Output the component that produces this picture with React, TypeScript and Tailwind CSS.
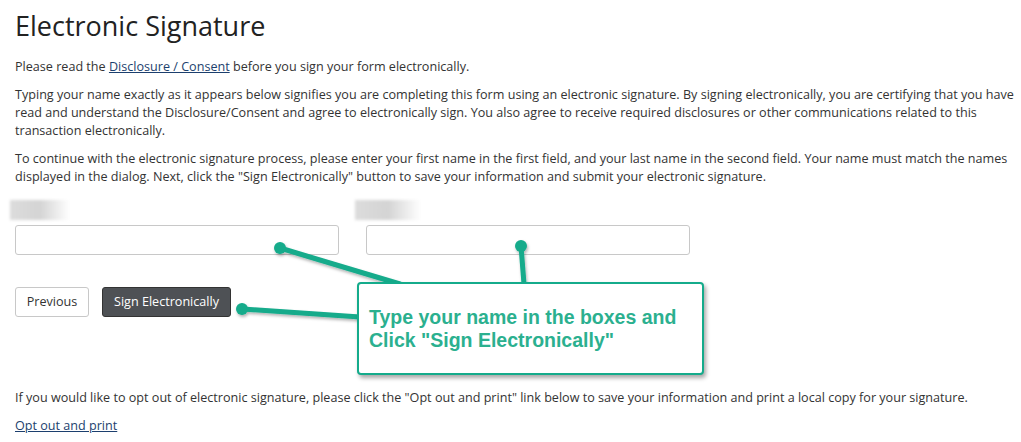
import React from "react";

const font = { fontFamily: '"Open Sans", "Liberation Sans", sans-serif' };

function BlurLabel({ className }: { className: string }) {
  return (
    <div
      className={`mb-[5px] h-[20px] bg-gradient-to-r from-[#dcdcdc] via-[#d4d4d4] to-white blur-[1.5px] ${className}`}
    />
  );
}

export default function App() {
  return (
    <div className="relative min-h-[442px] w-[1021px] bg-white text-[#333]" style={font}>
      <div className="pl-[15px] pr-[3px] pt-[9px]">
        <h1 className="text-[27px] leading-[34px] font-normal text-[#222]">Electronic Signature</h1>

        <div className="mt-[15px] space-y-[10px] text-[12.6px] leading-[18px]">
          <p>
            Please read the{" "}
            <a href="#" className="text-[#1c3f6e] underline">
              Disclosure / Consent
            </a>{" "}
            before you sign your form electronically.
          </p>
          <p>
            Typing your name exactly as it appears below signifies you are completing this form using an electronic
            signature. By signing electronically, you are certifying that you have read and understand the
            Disclosure/Consent and agree to electronically sign. You also agree to receive required disclosures or
            other communications related to this transaction electronically.
          </p>
          <p>
            To continue with the electronic signature process, please enter your first name in the first field, and
            your last name in the second field. Your name must match the names displayed in the dialog. Next, click
            the "Sign Electronically" button to save your information and submit your electronic signature.
          </p>
        </div>

        <div className="mt-[14px] flex gap-[27px]">
          <div>
            <BlurLabel className="-ml-[5px] w-[60px]" />
            <input className="h-[30px] w-[324px] rounded-[3px] border border-[#c8c8c8] bg-white px-2 outline-none" />
          </div>
          <div>
            <BlurLabel className="-ml-[11px] w-[66px]" />
            <input className="h-[30px] w-[324px] rounded-[3px] border border-[#c8c8c8] bg-white px-2 outline-none" />
          </div>
        </div>

        <div className="mt-[32px] flex gap-[13px] text-[12.6px]">
          <button className="h-[30px] w-[74px] rounded-[3px] border border-[#c8c8c8] bg-white text-[#333]">
            Previous
          </button>
          <button className="h-[30px] w-[129px] rounded-[3px] border border-[#333] bg-[#4e5155] text-white">
            Sign Electronically
          </button>
        </div>

        <div className="mt-[72px] space-y-[10px] text-[12.6px] leading-[18px]">
          <p>
            If you would like to opt out of electronic signature, please click the "Opt out and print" link below to
            save your information and print a local copy for your signature.
          </p>
          <p>
            <a href="#" className="text-[#1c3f6e] underline">
              Opt out and print
            </a>
          </p>
        </div>
      </div>

      {/* annotation overlay */}
      <svg className="pointer-events-none absolute left-0 top-0" width="1021" height="442">
        <defs>
          <filter id="sh" x="-20%" y="-20%" width="140%" height="140%">
            <feDropShadow dx="1" dy="2" stdDeviation="1.5" floodColor="#000" floodOpacity="0.3" />
          </filter>
        </defs>
        <g filter="url(#sh)" stroke="#14ab8b" strokeWidth="5" strokeLinecap="round" fill="#14ab8b">
          <line x1="280" y1="248" x2="400" y2="284" />
          <line x1="521" y1="246" x2="524" y2="284" />
          <line x1="242" y1="309" x2="360" y2="317" />
          <circle cx="280" cy="248" r="6" stroke="none" />
          <circle cx="521" cy="246" r="6" stroke="none" />
          <circle cx="242" cy="309" r="6" stroke="none" />
        </g>
      </svg>
      <div className="absolute left-[357px] top-[282px] flex h-[93px] w-[347px] items-center rounded-[4px] border-2 border-[#14ab8b] bg-white px-[10px] shadow-[2px_3px_4px_rgba(0,0,0,0.35)]">
        <p
          className="text-[19.5px] font-bold leading-[23px] text-[#2bb08f]"
          style={{ fontFamily: '"Liberation Sans", Arial, sans-serif' }}
        >
          Type your name in the boxes and
          <br />
          Click "Sign Electronically"
        </p>
      </div>
    </div>
  );
}
